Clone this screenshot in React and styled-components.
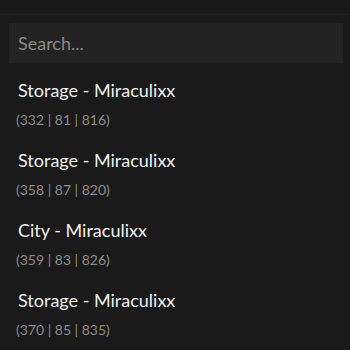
import styled, { createGlobalStyle } from 'styled-components'

const GlobalStyle = createGlobalStyle`
  html, body {
    margin: 0;
    padding: 0;
    background: #1a1a1a;
    font-family: "Lato", "Open Sans", sans-serif;
  }
`

const Page = styled.div`
  width: 350px;
  height: 350px;
  overflow: hidden;
  background: #1a1a1a;
`

const TopBar = styled.div`
  height: 14px;
  background: #181818;
  border-bottom: 1px solid #1f1f1f;
`

const Content = styled.div`
  padding: 8px 7px 0 9px;
`

const SearchInput = styled.input`
  display: block;
  box-sizing: border-box;
  width: 100%;
  height: 40px;
  border: none;
  outline: none;
  background: #232323;
  color: #ddd;
  padding: 0 9px;
  font-family: inherit;
  font-size: 18px;
  &::placeholder {
    color: #8a8a8a;
  }
`

const List = styled.ul`
  list-style: none;
  margin: 0;
  padding: 14px 0 0;
`

const Item = styled.li`
  height: 70px;
`

const Title = styled.div`
  padding-left: 9px;
  color: #f0f0f0;
  font-size: 18px;
  line-height: 26px;
`

const Coords = styled.div`
  padding-left: 7px;
  margin-top: 7px;
  color: #8c8c8c;
  font-size: 14px;
  line-height: 20px;
`

const places = [
  { name: 'Storage - Miraculixx', coords: [332, 81, 816] },
  { name: 'Storage - Miraculixx', coords: [358, 87, 820] },
  { name: 'City - Miraculixx', coords: [359, 83, 826] },
  { name: 'Storage - Miraculixx', coords: [370, 85, 835] },
]

export default function App() {
  return (
    <Page>
      <GlobalStyle />
      <TopBar />
      <Content>
        <SearchInput placeholder="Search..." />
        <List>
          {places.map((p, i) => (
            <Item key={i}>
              <Title>{p.name}</Title>
              <Coords>({p.coords.join(' | ')})</Coords>
            </Item>
          ))}
        </List>
      </Content>
    </Page>
  )
}
